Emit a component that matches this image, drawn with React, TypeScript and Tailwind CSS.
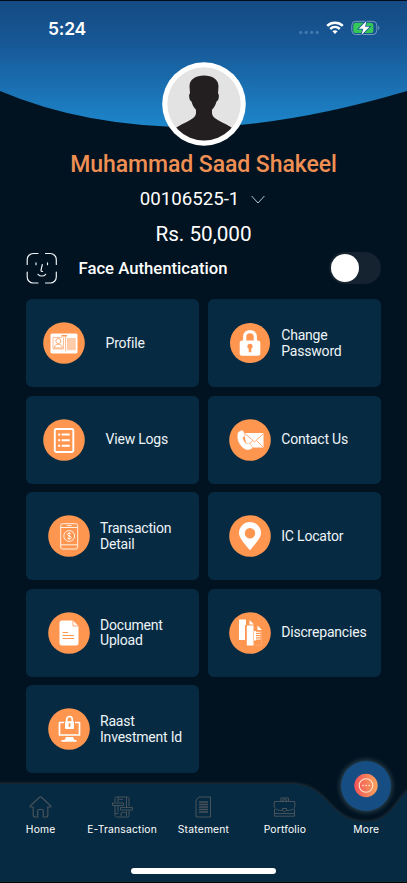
import type { ReactNode } from "react";

const ACCENT = "#ff9650";

function StatusBar() {
  return (
    <div className="flex h-[62px] items-start justify-between pr-[27px] pl-[48px] pt-[17px]">
      <span className="font-[Inter] text-[17.5px] leading-[23px] font-semibold tracking-[-0.2px]">5:24</span>
      <div className="flex h-[22px] items-center">
        <svg width="22" height="22" viewBox="0 0 22 22" fill="#3f79ae">
          <circle cx="1.7" cy="15.5" r="1.7" />
          <circle cx="7.2" cy="15.5" r="1.7" />
          <circle cx="12.7" cy="15.5" r="1.7" />
          <circle cx="18.2" cy="15.5" r="1.7" />
        </svg>
        <svg className="ml-[5px]" width="18" height="14" viewBox="0 0 18 14" fill="none" stroke="white">
          <path d="M1.2 4.8C5.5 0.7 12.5 0.7 16.8 4.8" strokeWidth="2.5" />
          <path d="M4.2 8C7 5.4 11 5.4 13.8 8" strokeWidth="2.4" />
          <path d="M6.4 10.3C8 9 10 9 11.6 10.3L9 13z" fill="white" stroke="none" />
        </svg>
        <svg className="ml-[7px]" width="29" height="16" viewBox="0 0 29 16">
          <rect x="0.8" y="1.3" width="25" height="13.2" rx="4" fill="none" stroke="#769cc0" strokeWidth="1" />
          <path d="M27.3 5.8c1.4.5 1.4 3.7 0 4.2z" fill="#769cc0" />
          <rect x="2.3" y="2.8" width="20" height="10.2" rx="2.6" fill="#35c759" />
          <path d="M15.5.9 7.8 8.8h4.5L10.4 15l8.2-8.3H14z" fill="white" stroke="#17599a" strokeWidth="1.6" paintOrder="stroke" />
        </svg>
      </div>
    </div>
  );
}

function Avatar() {
  return (
    <svg className="mx-auto block" width="84" height="84" viewBox="0 0 84 84">
      <defs>
        <clipPath id="face">
          <circle cx="42" cy="42" r="36.5" />
        </clipPath>
      </defs>
      <circle cx="42" cy="42" r="41.8" fill="white" />
      <circle cx="42" cy="42" r="36.7" fill="#e3e3e3" />
      <path
        clipPath="url(#face)"
        fill="#231f20"
        d="M42 13.500c-8 0-14.500 3.500-14.500 11l.5 7c-1.600.5-1 7.500 1.500 8 1 4 2.800 6.500 4.500 8.200v3.800c-.5 6-11 8-22 15.500V84h60V67C61 59.500 50.500 57.500 50 51.500v-3.800c1.700-1.700 3.500-4.200 4.500-8.200 2.500-.5 3.100-7.500 1.500-8l.5-7C56.500 17 50 13.500 42 13.500z"
      />
    </svg>
  );
}

function FaceIcon() {
  return (
    <svg width="32" height="32" viewBox="0 0 32 32" fill="none" stroke="#f2f6f8" strokeWidth="1.15" strokeLinecap="round">
      <path d="M1.200 12.500V7.500a6 6 0 0 1 6-6H12M19.500 1.500h4.800a6 6 0 0 1 6 6v5M30.300 20v5a6 6 0 0 1-6 6H19.500M12 31H7.200a6 6 0 0 1-6-6v-5" />
      <path d="M10 10.700v2M21.500 10.700v2M16.300 12.500l-1.300 5.500c-.2 1 .4 1.500 1.600 1.500M12 22.300c2 2.300 5.700 2.300 7.700 0" />
    </svg>
  );
}

const tileIcons: Record<string, ReactNode> = {
  profile: (
    <>
      <rect x="7.500" y="11.500" width="27" height="20" rx="1.500" fill="white" />
      <g fill="none" stroke={ACCENT} strokeWidth=".8">
        <path d="M10 15.500h9M10 15.500v11.500h10.500V15.500M22.500 15v14" strokeWidth=".6" />
        <circle cx="15.300" cy="19" r="2.500" />
        <path d="M11.300 26c.2-2.500 1.700-3.700 4-3.700s3.800 1.200 4 3.700z" />
        <path d="M18.500 13.800h5.500" strokeWidth="1.500" />
      </g>
      <rect x="23.800" y="16" width="9" height="12.200" fill="#ffcca9" />
    </>
  ),
  lock: (
    <>
      <path d="M15.700 20v-5.300c0-6.900 10.600-6.900 10.600 0V20" fill="none" stroke="white" strokeWidth="3.200" />
      <rect x="10.700" y="18.500" width="20.600" height="15.300" rx="2.500" fill="white" />
      <path d="M21 21.800a2.600 2.600 0 0 0-1.300 4.900v3.500h2.600v-3.500A2.600 2.600 0 0 0 21 21.800" fill={ACCENT} />
    </>
  ),
  logs: (
    <g fill="none" stroke="white" strokeWidth="1.900">
      <rect x="11.800" y="10" width="18.500" height="23" rx="1.500" />
      <path d="M15.200 15.500h2m1.500 0h8M15.200 21.200h2m1.500 0h8M15.200 26.800h2m1.500 0h8" />
    </g>
  ),
  contact: (
    <>
      <path d="M15 14h19.500v14.500H18z" fill="white" />
      <path d="m16 14.500 9.500 8.500 9-8.500M18 28l5.500-6.500M34 28l-6.500-6.500" fill="none" stroke={ACCENT} strokeWidth=".8" />
      <path d="m9 13 3.500-1.700c1-.4 1.600.1 1.900.8l1.700 4c.2.800-.2 1.400-1.100 1.700l-1 .4c.3 2.800 1.800 5.300 4 6.800l1-.7c.8-.5 1.500-.3 2 .4l2.200 3c.5.800.4 1.400-.4 2-3.200 2.300-6 1.700-9.300-1C9.500 25.300 6.800 18.500 9 13z" fill="white" stroke={ACCENT} strokeWidth=".5" />
    </>
  ),
  phone: (
    <g fill="none" stroke="#fff0e4" strokeWidth="1">
      <rect x="12.700" y="8.700" width="17" height="25.300" rx="2" />
      <path d="M12.700 12.500h17M12.700 29.800h17M19 10.600h4.500" />
      <circle cx="21.200" cy="21" r="5.400" />
      <path d="M23.200 19.200c-.6-1.400-3.800-1.300-3.800.2 0 1.800 3.900 1.300 3.900 3.100 0 1.600-3.400 1.700-4.100.2M21.200 17.200v7.600" />
    </g>
  ),
  pin: (
    <path fillRule="evenodd" fill="white" d="M21 7a11 11 0 0 0-11 11c0 5 5 10 11 17.300C27 28 32 23 32 18A11 11 0 0 0 21 7m0 6a5.200 5.200 0 1 1 0 10.400A5.200 5.200 0 0 1 21 13" />
  ),
  document: (
    <>
      <path d="M13.500 8.500h11.500l5.500 5.500V31a2.500 2.500 0 0 1-2.500 2.500H14a2.500 2.500 0 0 1-2.500-2.500V11a2.500 2.500 0 0 1 2-2.500z" fill="white" />
      <path d="M25 8.500V14h5.500" fill="none" stroke={ACCENT} strokeWidth=".8" />
      <path d="M14.500 20.500h5.500M14.500 23.500h11.500M14.500 26.500h11.500" stroke={ACCENT} strokeWidth="1.200" />
    </>
  ),
  files: (
    <>
      <path d="M10 7.500h7V13h-1v15h-6zM20.500 8l4.500 4.500h-4.500z" fill="white" />
      <path d="M17.800 13.500h6.700v20h-6.700zM25 19h2v9.500h-2zM28.500 13.500V18H33z" fill="white" />
      <path d="M25 20.300h6.500M25 22.500h6.500M25 24.700h6.500M25 27h6.500" stroke="white" strokeWidth="1" />
      <path d="M25 33.300h7.500V19" stroke="white" strokeOpacity=".35" strokeWidth=".5" fill="none" />
    </>
  ),
  raast: (
    <>
      <path d="M16 14.500h-4.500v12.500h20V14.500H27" fill="none" stroke="white" strokeWidth="1.700" strokeLinejoin="round" />
      <path d="M18 29h7l1.500 3h2v1.800h-15V32h3z" fill="white" />
      <path d="M18.700 15v-3.500c0-4 5.600-4 5.600 0V15" fill="none" stroke="white" strokeWidth="1.700" />
      <rect x="17" y="13.300" width="9" height="7.700" rx=".8" fill="white" />
      <path d="M21.500 15.200v3.700" stroke={ACCENT} strokeWidth="1.800" />
    </>
  ),
};

function Tile({ icon, label, place }: { icon: string; label: string; place: string }) {
  return (
    <button className={`flex h-[88px] items-center rounded-[6px] bg-[#062a41] text-left ${place}`}>
      <svg className="shrink-0" width="42" height="42" viewBox="0 0 42 42">
        <circle cx="21" cy="21" r={icon === "lock" ? 20 : 20.8} fill={ACCENT} />
        {tileIcons[icon]}
      </svg>
      <span className="pt-px text-[14px] leading-[15.500px] tracking-[-0.200px] whitespace-pre-line text-[#eef4f8]">{label}</span>
    </button>
  );
}

const tiles = [
  { icon: "profile", label: "Profile", place: "pl-[16.500px] gap-[21px]" },
  { icon: "lock", label: "Change\nPassword", place: "pl-[21px] gap-[10.500px]" },
  { icon: "logs", label: "View Logs", place: "pl-[16.500px] gap-[21px]" },
  { icon: "contact", label: "Contact Us", place: "pl-[21px] gap-[10.500px]" },
  { icon: "phone", label: "Transaction\nDetail", place: "pl-[21.500px] gap-[10.500px]" },
  { icon: "pin", label: "IC Locator", place: "pl-[21px] gap-[10.500px]" },
  { icon: "document", label: "Document\nUpload", place: "pl-[21.500px] gap-[10.500px]" },
  { icon: "files", label: "Discrepancies", place: "pl-[21px] gap-[10.500px]" },
  { icon: "raast", label: "Raast\nInvestment Id", place: "pl-[21.500px] gap-[10.500px]" },
];

const navItems: { label: string; drawing: ReactNode }[] = [
  {
    label: "Home",
    drawing: <path strokeWidth="1.200" d="M4.200 11H1.800c-.7 0-.9-.8-.4-1.300L10.300 1.500c.8-.7 1.600-.7 2.400 0l8.900 8.200c.5.500.3 1.300-.4 1.300h-2.400v8c0 1.500-.5 2-2 2h-2.500v-6.500c0-.7-.3-1-1-1h-3.600c-.7 0-1 .3-1 1V21H6.200c-1.500 0-2-.5-2-2z" />,
  },
  {
    label: "E-Transaction",
    drawing: (
      <>
        <path d="M4 6V2.500C4 1.500 4.500 1 5.500 1H16.500c1 0 1.500.5 1.500 1.500V10M4 10v9.500C4 20.500 4.500 21 5.500 21H17c.8 0 1-.5 1-1.200V15" />
        <path d="M1.500 7h11V9.500h-11zM9.500 11.500h12V14h-12zM4 17.500h3.500M7 1v5M15.500 1v10M7 10v6M10 20v-3l2-1 1.500 1 2-1.500V20M8 3.300h4" />
      </>
    ),
  },
  {
    label: "Statement",
    drawing: (
      <>
        <path d="M7 1h11.500v20H4V4z" />
        <path d="M7 6h9M7 8.500h9M7 11h9M7 13.500h9M7 16h9" strokeWidth="1.300" />
      </>
    ),
  },
  {
    label: "Portfolio",
    drawing: (
      <>
        <path d="M8 5V2h7.500v3M10 5V3.800h3.500V5M1.200 5.500h20.600v4.500c0 3.500-4 4.500-8.300 4.500M1.200 5.500v4.500c0 3.500 4 4.500 8.300 4.500M1.500 13v7.200h20V13M1.500 17.500h20" />
        <path d="M9.500 12.500h4V14c0 2-4 2-4 0z" />
      </>
    ),
  },
];

function BottomNav() {
  return (
    <nav className="relative -mt-[13px] h-[123px] shrink-0">
      <svg className="absolute inset-0 overflow-visible" width="407" height="123" viewBox="0 0 407 123">
        <defs>
          <filter id="edge" x="-5%" y="-20%" width="110%" height="140%"><feGaussianBlur stdDeviation="1.800" /></filter>
          <filter id="halo" x="-30%" y="-30%" width="160%" height="160%"><feGaussianBlur stdDeviation="2.500" /></filter>
          <linearGradient id="more"><stop stopColor="#f55257" /><stop offset="1" stopColor="#f8a45d" /></linearGradient>
        </defs>
        <path d="M-5 23H290C331 23 328 61 366 61C394 61 398 31 412 28V125H-5z" fill="#3a4247" opacity=".65" filter="url(#edge)" />
        <path d="M-5 24H290C331 24 328 62 366 62C394 62 398 32 412 29V121.500H-5z" fill="#062a41" />
        <circle cx="366" cy="26" r="26" fill="#304752" filter="url(#halo)" />
        <circle cx="366" cy="26" r="25" fill="#164d82" />
        <circle cx="366" cy="25.500" r="11.700" fill="url(#more)" />
        <circle cx="366" cy="25.500" r="6.800" fill="none" stroke="#ffe5cf" strokeWidth="1.100" />
        <path d="M363 25.500h.1M366 25.500h.1M369 25.500h.1" stroke="#fff0e4" strokeWidth="1.500" strokeLinecap="round" />
        <path d="M0 122.500h407" stroke="#000407" />
      </svg>
      <div className="relative grid grid-cols-5 pt-[36px]">
        {navItems.map((item) => (
          <div key={item.label} className="flex flex-col items-center">
            <svg width="23" height="22" viewBox="0 0 23 22" fill="none" stroke="#48525a" strokeWidth="1">{item.drawing}</svg>
            <span className="mt-[4px] font-[Inter] text-[10.300px] leading-[14px] tracking-[0.200px] whitespace-nowrap">{item.label}</span>
          </div>
        ))}
        <span className="mt-[26px] text-center font-[Inter] text-[10.300px] leading-[14px] tracking-[0.200px]">More</span>
      </div>
      <div className="relative mx-auto mt-[32px] h-[5.500px] w-[145px] rounded-full bg-white" />
    </nav>
  );
}

export default function App() {
  return (
    <main className="relative flex h-[883px] w-[407px] flex-col overflow-hidden bg-[#011321] font-[Roboto,sans-serif] text-white">
      <svg className="absolute top-0 left-0" width="407" height="128" viewBox="0 0 407 128">
        <defs>
          <linearGradient id="sky" x2="0" y2="1">
            <stop stopColor="#154a82" />
            <stop offset=".35" stopColor="#175897" />
            <stop offset="1" stopColor="#1d86ca" />
          </linearGradient>
        </defs>
        <path d="M0 0H407V91Q285 127 193 127Q85 127 0 91z" fill="url(#sky)" />
        <path d="M0 .5H407" stroke="#020b1c" />
      </svg>
      <header className="relative">
        <StatusBar />
        <Avatar />
        <h1 className="flex h-[36px] items-center justify-center pt-[2px] text-[23px] font-medium tracking-[-0.070px] text-[#ef8f53]">Muhammad Saad Shakeel</h1>
        <div className="flex h-[34px] items-center justify-center gap-[12px] pr-[2px] text-[18.700px]">
          <span>00106525-1</span>
          <svg width="14" height="9" viewBox="0 0 14 9" fill="none" stroke="#bdc5cc" strokeWidth="1"><path d="m.6 1 6.400 7 6.400-7" /></svg>
        </div>
        <p className="flex h-[36px] items-center justify-center pt-px text-[20.700px]">Rs. 50,000</p>
      </header>
      <section className="flex h-[32px] items-center pr-[26px] pl-[26px]">
        <FaceIcon />
        <span className="ml-[20.500px] pt-px text-[16.700px] font-medium">Face Authentication</span>
        <div className="ml-auto flex h-[32px] w-[52px] items-center rounded-full bg-[#14232f] pl-[1.500px]">
          <div className="size-[28px] rounded-full bg-white" />
        </div>
      </section>
      <section className="mx-[26px] mt-[15px] grid shrink-0 grid-cols-2 gap-[8.500px]">
        {tiles.map((tile) => <Tile key={tile.label} {...tile} />)}
      </section>
      <BottomNav />
    </main>
  );
}
